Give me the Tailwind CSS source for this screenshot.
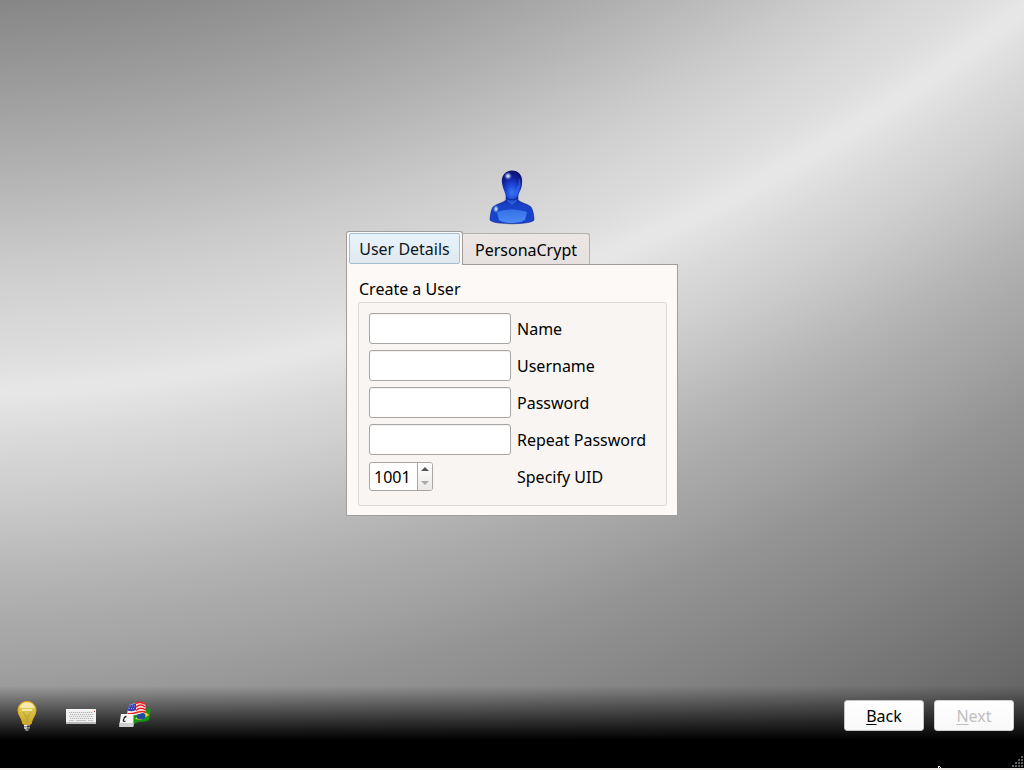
<!DOCTYPE html>
<html lang="en">
<head>
<meta charset="utf-8">
<meta name="viewport" content="width=device-width, initial-scale=1">
<title>Create a User</title>
<script src="https://cdn.jsdelivr.net/npm/@tailwindcss/browser@4"></script>
</head>
<body class="min-h-screen flex flex-col bg-[#f0ebe7] pb-0.5 font-['Noto_Sans',sans-serif] text-base leading-6 text-black">
<div class="relative flex-1 flex flex-col overflow-hidden bg-[radial-gradient(circle_at_-81px_-1382px,#868686_1384px,#9c9c9c_1472px,#b3b3b3_1560px,#cbcbcb_1648px,#d6d6d6_1700px,#dddddd_1740px,#e6e6e6_1772px,#e6e6e6_1780px,#d9d9d9_1824px,#cfcfcf_1868px,#c3c3c3_1912px,#b6b6b6_1956px,#ababab_2000px,#a2a2a2_2044px,#949494_2100px,#828282_2200px,#666666_2348px)]">

  <main class="flex-1 flex flex-col items-center justify-center pb-0.5">
    <svg class="mb-1.5 h-14 w-12" viewBox="0 0 48 56" aria-hidden="true">
      <defs>
        <radialGradient id="head" cx=".5" cy=".78" r=".75"><stop offset="0" stop-color="#3a78f4"/><stop offset=".35" stop-color="#1f4bdc"/><stop offset=".7" stop-color="#14229f"/><stop offset="1" stop-color="#0a1070"/></radialGradient>
        <linearGradient id="body" x2="0" y2="1"><stop offset="0" stop-color="#0d1f94"/><stop offset=".4" stop-color="#1843c6"/><stop offset="1" stop-color="#1644cc"/></linearGradient>
        <linearGradient id="belly" x2="0" y2="1"><stop offset="0" stop-color="#3570e4"/><stop offset="1" stop-color="#4c8cf5"/></linearGradient>
        <radialGradient id="shine"><stop offset="0" stop-color="#fff"/><stop offset=".4" stop-color="#a9c8f4" stop-opacity=".8"/><stop offset="1" stop-color="#6a9ae8" stop-opacity="0"/></radialGradient>
      </defs>
      <path d="M18 25V31C15 34 8 35 5 38C3 41 2 47 2 51C5 56 43 56 46 51C46 47 45 41 43 38C40 35 33 34 30 31V25Z" fill="url(#body)" stroke="#10268f" stroke-width=".6"/>
      <path d="M9 43C18 39.500 31 39.500 39 43L37 51C31 55 17 55 11 51Z" fill="url(#belly)"/>
      <path d="M24 1.500C17 1.500 13 7 14 14C15 20 17 23 18 27C20 31 28 31 30 27C31 23 34 20 34 14C35 7 31 1.500 24 1.500Z" fill="url(#head)"/>
      <path d="M18 30C21 32 27 32 30 30L28 33L24 36L20 33Z" fill="#3474ec" opacity=".6"/>
      <path d="M31 9C35 15 31 24 27 28C25 24 31 19 31 9Z" fill="#3f79f5" opacity=".45"/>
      <ellipse cx="20" cy="7" rx="4" ry="4" fill="url(#shine)"/>
      <ellipse cx="8" cy="40" rx="3" ry="4" fill="url(#shine)"/>
    </svg>

    <div>
      <div class="flex items-end" role="tablist">
        <div class="relative z-10 -mb-px h-[34px] rounded-t-[3px] border border-b-0 border-[#a09d9b] bg-[#fdf9f6] px-0.5 pt-px">
          <button type="button" role="tab" aria-selected="true" class="h-[31px] w-[111px] rounded-[2px] border border-[#a5c0d3] bg-linear-to-b from-[#e7f4fd] to-[#e0e8ee] pt-px text-[#10171c]">User Details</button>
        </div>
        <button type="button" role="tab" aria-selected="false" class="h-[31px] w-[127px] rounded-tr-[3px] border border-b-0 border-l-0 border-[#b5b1ae] bg-linear-to-b from-[#ebe6e3] to-[#e6e1de] pt-0.5">PersonaCrypt</button>
      </div>
      <form class="w-[332px] border border-[#a09d9b] bg-[#fdf9f6] pt-3 pr-2.5 pb-[9px] pl-[11px]">
        <fieldset>
          <legend class="pb-px pl-px">Create a User</legend>
          <div class="grid grid-cols-[142px_1fr] auto-rows-[31px] items-center gap-1.5 rounded-[2px] border border-[#dfdad7] bg-[#f9f5f2] px-2.5 pt-2.5 pb-[13px]">
            <input id="name" type="text" class="h-full w-full rounded-[3px] border border-[#a9a6a3] bg-white px-1 inset-shadow-2xs">
            <label for="name" class="pt-0.5">Name</label>
            <input id="username" type="text" class="h-full w-full rounded-[3px] border border-[#a9a6a3] bg-white px-1 inset-shadow-2xs">
            <label for="username" class="pt-0.5">Username</label>
            <input id="password" type="password" class="h-full w-full rounded-[3px] border border-[#a9a6a3] bg-white px-1 inset-shadow-2xs">
            <label for="password" class="pt-0.5">Password</label>
            <input id="repeat" type="password" class="h-full w-full rounded-[3px] border border-[#a9a6a3] bg-white px-1 inset-shadow-2xs">
            <label for="repeat" class="pt-0.5">Repeat Password</label>
            <div class="flex h-[29px] w-16 overflow-hidden rounded-[3px] border border-[#a9a6a3] bg-white">
              <input id="uid" type="text" inputmode="numeric" value="1001" class="min-w-0 flex-1 pt-0.5 pl-1">
              <div class="flex w-[15px] flex-col border-l border-[#a9a6a3] bg-linear-to-b from-white to-[#ebe8e6]">
                <button type="button" aria-label="Increase UID" class="flex flex-1 items-center justify-center"><svg class="h-1 w-2" viewBox="0 0 8 4"><path d="M0 4L4 0L8 4Z" fill="#555"/></svg></button>
                <button type="button" aria-label="Decrease UID" class="flex flex-1 items-center justify-center" disabled><svg class="h-1 w-2" viewBox="0 0 8 4"><path d="M0 0L4 4L8 0Z" fill="#aaa"/></svg></button>
              </div>
            </div>
            <label for="uid" class="pt-0.5">Specify UID</label>
          </div>
        </fieldset>
      </form>
    </div>
  </main>

  <footer class="flex h-[82px] items-start justify-between bg-linear-to-b from-transparent to-black to-[54px] pt-3.5 pr-2.5">
    <div class="flex">
      <button type="button" aria-label="Help" class="flex h-8 w-[54px] items-center justify-center">
        <svg class="h-8 w-5" viewBox="0 0 20 32">
          <defs><linearGradient id="bulb" x2="0" y2="1"><stop offset="0" stop-color="#f0df8c"/><stop offset=".35" stop-color="#d9c74c"/><stop offset="1" stop-color="#c9a92c"/></linearGradient></defs>
          <path d="M7 24H13V28L11 31H9L7 28Z" fill="#8b8b8b"/>
          <path d="M7 25.500H10M7 28H10" stroke="#eee"/><path d="M10 26.500H13M10 29H12" stroke="#444"/>
          <path d="M10 1.500C4.500 1.500 1 5.500 1 10.500C1 15 5 18 6 24H14C15 18 19 15 19 10.500C19 5.500 15.500 1.500 10 1.500Z" fill="url(#bulb)" stroke="#e9aa0b"/>
          <path d="M3 8C4 1 16 1 17 8Z" fill="#fff8d6" opacity=".65"/>
          <path d="M5 10H15" stroke="#fffbe0" stroke-width="1.300"/>
          <path d="M6 12L9 17V23M14 12L11 17V23M8 16H12" fill="none" stroke="#b09d30" stroke-width=".7"/>
        </svg>
      </button>
      <button type="button" aria-label="Keyboard layout" class="flex h-8 w-[54px] items-center justify-center">
        <svg class="h-4 w-[30px]" viewBox="0 0 30 16">
          <path d="M0 1H30V16H0Z" fill="#b9b9b9"/><path d="M0 1H30V14H0Z" fill="#f1f1f1"/><path d="M0 1.500H30" stroke="#fff"/>
          <path d="M3 4.500H27M4 6.500H27M3 8.500H27M4 10.500H27" stroke="#b5b5b5" stroke-dasharray="1.300 .7"/>
          <path d="M3 12.500H8M10 12.500H20M22 12.500H27" stroke="#c4c4c4"/><path d="M28 3.500H29" stroke="#b33"/>
        </svg>
      </button>
      <button type="button" aria-label="Language" class="flex h-8 w-[54px] items-center justify-center">
        <svg class="h-8 w-8" viewBox="0 0 32 32">
          <path d="M14 13C20 9 24 11 32 8L30 20C26 23 21 20 15 24Z" fill="#179414"/>
          <path d="M16 19L24 10L30 15L22 20Z" fill="#e8d52b"/><ellipse cx="22" cy="16" rx="4.500" ry="3.500" fill="#244da1"/>
          <path d="M11 4C16 5 19 0 26 3L27 13C22 11 17 18 8 14L9 9Z" fill="#fbeeee"/>
          <path d="M17 3.500C20 1.800 23 2 26 4M17 7C21 4 23 4.500 26 7M17 10.500C20 7.500 23 7.500 27 10M8.500 13.500C16 15 21 9 27 12.500" fill="none" stroke="#e62323" stroke-width="1.600"/>
          <path d="M11 4C13 5 15 4.500 17 3L17 10C14 11.500 11 11.500 8.500 10.500Z" fill="#3540b5"/>
          <path d="M11 6H16M10 8.500H16" stroke="#a5abec" stroke-width=".8" stroke-dasharray="1 1"/>
          <path d="M2 14H14.500V25L14 27H.5V24Z" fill="#f4f4f4"/><path d="M.5 23H14.500V26L14 27H.5Z" fill="#cfcfcf"/>
          <path d="M7.500 16.500C5 17 4.500 18.500 5.500 19M5 19C3.500 20.500 4.500 22 6.500 21" fill="none" stroke="#222" stroke-width="1.300"/>
        </svg>
      </button>
    </div>
    <div class="flex gap-2.5">
      <button type="button" class="h-[31px] w-20 rounded-[3px] border border-[#c6c4c2] bg-linear-to-b from-white to-[#f8f8f8]"><span class="underline decoration-1 underline-offset-2">B</span>ack</button>
      <button type="button" disabled class="h-[31px] w-20 rounded-[3px] border border-[#d2d0ce] bg-linear-to-b from-white to-[#f8f8f8] text-[#bfbfbf]"><span class="underline decoration-1 underline-offset-2">N</span>ext</button>
    </div>
  </footer>

  <!-- window resize grip -->
  <svg class="absolute right-0 bottom-0 h-3 w-3" viewBox="0 0 12 12" aria-hidden="true"><path fill="#5e5e5e" d="M9 0h2v2h-2zM6 3h2v2h-2zM9 3h2v2h-2zM3 6h2v2h-2zM6 6h2v2h-2zM9 6h2v2h-2zM0 9h2v2h-2zM3 9h2v2h-2zM6 9h2v2h-2zM9 9h2v2h-2z"/></svg>
  <!-- tip of the mouse pointer -->
  <svg class="absolute right-[83px] bottom-0 h-0.5 w-[3px]" viewBox="0 0 3 2" aria-hidden="true"><path fill="#fff" d="M0 0h2v1h-1v1h-1zM2 1h1v1h-1z"/></svg>
</div>
</body>
</html>
